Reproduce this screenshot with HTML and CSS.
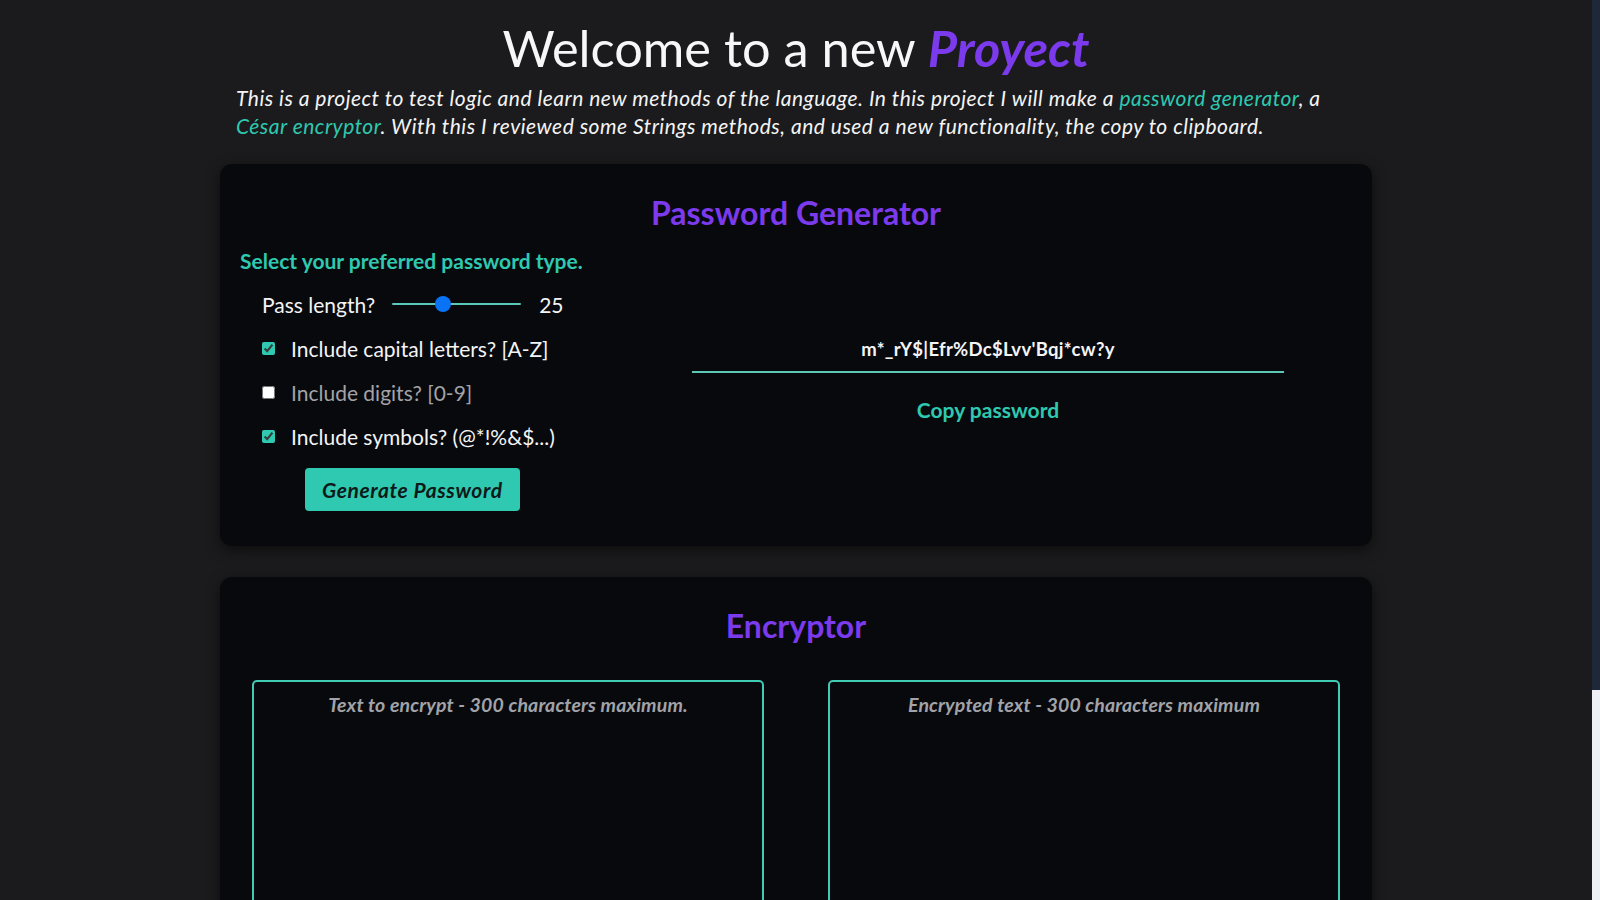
FILE: index.html
```html
<!DOCTYPE html>
<html lang="en">
<head>
<meta charset="utf-8">
<title>Proyect</title>
<link rel="stylesheet" href="styles.css">
</head>
<body>
<header class="intro">
  <h1 class="intro-title">Welcome to a new <em class="accent">Proyect</em></h1>
  <p class="intro-text">This is a project to test logic and learn new methods of the language. In this project I will make a <span class="hl">password generator</span>, a <span class="hl">César encryptor</span>. With this I reviewed some Strings methods, and used a new functionality, the copy to clipboard.</p>
</header>
<main class="content">
  <section class="card">
    <h2 class="card-title">Password Generator</h2>
    <h3 class="subtitle">Select your preferred password type.</h3>
    <div class="gen-grid">
      <div class="options">
        <div class="row">
          <label class="opt-label" for="len">Pass length?</label>
          <input class="range" id="len" type="range" min="4" max="60" value="25">
          <span class="opt-label">25</span>
        </div>
        <div class="row">
          <input class="check" type="checkbox" checked>
          <span class="opt-label">Include capital letters? [A-Z]</span>
        </div>
        <div class="row">
          <input class="check" type="checkbox">
          <span class="opt-label muted">Include digits? [0-9]</span>
        </div>
        <div class="row">
          <input class="check" type="checkbox" checked>
          <span class="opt-label">Include symbols? (@*!%&amp;$...)</span>
        </div>
        <div class="btn-row">
          <button class="btn">Generate Password</button>
        </div>
      </div>
      <div class="output">
        <div class="pass">m*_rY$|Efr%Dc$Lvv'Bqj*cw?y</div>
        <button class="copy">Copy password</button>
      </div>
    </div>
  </section>
  <section class="card card-enc">
    <h2 class="card-title">Encryptor</h2>
    <div class="enc-grid">
      <textarea class="area" placeholder="Text to encrypt - 300 characters maximum."></textarea>
      <textarea class="area" placeholder="Encrypted text - 300 characters maximum"></textarea>
    </div>
  </section>
</main>
<div class="scrollbar"><div class="scroll-thumb"></div></div>
</body>
</html>
```

FILE: styles.css
```css
html {
  background: #1b1b1d;
}
body {
  margin: 0;
  padding: 0 8px 60px 0;
  background: #1b1b1d;
  color: #f4f4f5;
  font-family: Lato, "Noto Sans", sans-serif;
}
.scrollbar {
  position: fixed;
  top: 0;
  right: 0;
  width: 8px;
  height: 100vh;
  background: #eff0f6;
}
.scroll-thumb {
  height: 690px;
  background: #1f2838;
}
.intro {
  width: 1120px;
  margin: 0 auto;
  padding-top: 19px;
}
.intro-title {
  margin: 0;
  text-align: center;
  font-size: 50.5px;
  font-weight: 400;
  line-height: 58px;
  color: #f7f7f7;
}
.accent {
  color: #7c3aed;
  font-weight: 700;
}
.intro-text {
  margin: 7px 0 0;
  font-size: 21px;
  line-height: 28px;
  letter-spacing: 0.5px;
  font-style: italic;
  color: #f4f4f5;
}
.hl {
  color: #2ec9b0;
}
.content {
  width: 1152px;
  margin: 24px auto 0;
  display: flex;
  flex-direction: column;
  gap: 31px;
}
.card {
  background: #08090d;
  border-radius: 12px;
  box-shadow: 0 4px 14px rgba(0, 0, 0, 0.55);
  padding: 31px 16px 35px;
}
.card-title {
  margin: 0;
  text-align: center;
  font-size: 32px;
  line-height: 36px;
  font-weight: 700;
  color: #7c3aed;
}
.subtitle {
  margin: 18px 0 0 4px;
  font-size: 21px;
  line-height: 24px;
  font-weight: 700;
  color: #2ec9b0;
}
.gen-grid {
  margin-top: 9px;
  display: grid;
  grid-template-columns: 384px 1fr;
}
.options {
  padding-left: 26px;
}
.row {
  height: 44px;
  display: flex;
  align-items: center;
  gap: 16px;
}
.opt-label {
  font-size: 21px;
  color: #f4f4f5;
}
.muted {
  color: #a3a3a6;
}
.range {
  -webkit-appearance: none;
  appearance: none;
  width: 129px;
  height: 16px;
  margin: 0 2px 0 1px;
  background: transparent;
}
.range::-webkit-slider-runnable-track {
  height: 2px;
  background: #5cc9b6;
  border-radius: 1px;
}
.range::-webkit-slider-thumb {
  -webkit-appearance: none;
  appearance: none;
  width: 16px;
  height: 16px;
  border-radius: 50%;
  background: #0a73f5;
  margin-top: -7px;
}
.check {
  width: 13px;
  height: 13px;
  margin: 0;
  accent-color: #2ec9b0;
}
.btn-row {
  padding: 10px 0 0 43px;
}
.btn {
  height: 43px;
  padding: 0 17px;
  border: none;
  border-radius: 4px;
  background: #2ec9b0;
  color: #0d1a1a;
  font-family: inherit;
  font-size: 21px;
  letter-spacing: 0.6px;
  font-style: italic;
  font-weight: 700;
}
.output {
  display: flex;
  flex-direction: column;
  align-items: center;
  padding-top: 44px;
}
.pass {
  width: 592px;
  height: 45px;
  line-height: 46px;
  text-align: center;
  font-size: 18.5px;
  letter-spacing: 0.3px;
  font-weight: 700;
  color: #f4f4f5;
  border-bottom: 2px solid #5cc9b6;
}
.copy {
  margin-top: 25px;
  padding: 0;
  background: none;
  border: none;
  font-family: inherit;
  font-size: 21px;
  line-height: 24px;
  font-weight: 700;
  color: #2ec9b0;
}
.card-enc {
  padding: 31px 32px 40px;
}
.enc-grid {
  margin-top: 36px;
  display: flex;
  justify-content: space-between;
}
.area {
  width: 512px;
  height: 320px;
  box-sizing: border-box;
  background: #08090d;
  border: 2px solid #40cbb5;
  border-radius: 5px;
  padding: 11px 10px;
  resize: none;
  font-family: inherit;
  font-size: 19.5px;
  letter-spacing: 0.15px;
  text-align: center;
  color: #f4f4f5;
}
.area::placeholder {
  color: #a1a3a8;
  font-style: italic;
  font-weight: 700;
}
```
